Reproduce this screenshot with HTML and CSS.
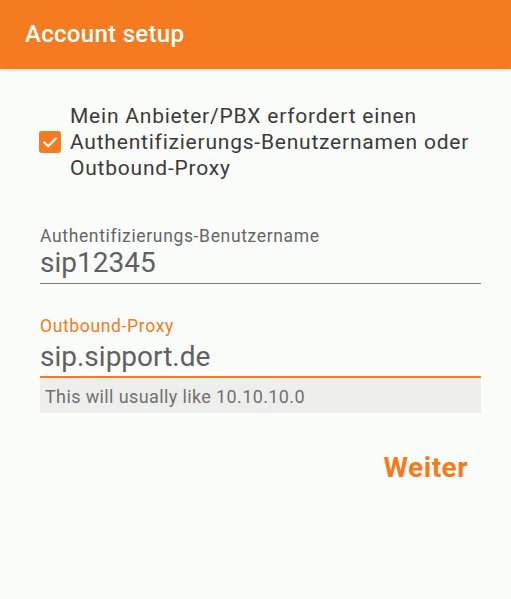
FILE: index.html
```html
<!DOCTYPE html>
<html lang="de">
<head>
<meta charset="utf-8">
<title>Account setup</title>
<link rel="stylesheet" href="styles.css">
</head>
<body>
<header class="appbar">
  <h1 class="appbar-title">Account setup</h1>
</header>
<main class="content">
  <label class="check-row">
    <span class="checkbox">
      <svg viewBox="0 0 22 22" width="22" height="22" aria-hidden="true">
        <path d="M5.2 11.4 L9.2 15.2 L16.8 7.4" fill="none" stroke="#fff" stroke-width="2.2" stroke-linecap="round" stroke-linejoin="round"/>
      </svg>
    </span>
    <span class="check-text">Mein Anbieter/PBX erfordert einen Authentifizierungs-Benutzernamen oder Outbound-Proxy</span>
  </label>

  <div class="field field-first">
    <div class="field-label">Authentifizierungs-Benutzername</div>
    <div class="field-value">sip12345</div>
  </div>

  <div class="field field-focus">
    <div class="field-label">Outbound-Proxy</div>
    <div class="field-value">sip.sipport.de</div>
  </div>
  <div class="helper">This will usually like 10.10.10.0</div>

  <div class="actions">
    <button class="btn-text" type="button">Weiter</button>
  </div>
</main>
</body>
</html>
```

FILE: styles.css
```css
html, body {
  margin: 0;
  padding: 0;
}
body {
  width: 511px;
  height: 599px;
  background: #fafcf9;
  font-family: Roboto, "Noto Sans", sans-serif;
  overflow: hidden;
}
.appbar {
  height: 69px;
  background: #f47b20;
  box-shadow: 0 1px 3px rgba(0,0,0,0.18);
  display: flex;
  align-items: center;
  padding-left: 25px;
  box-sizing: border-box;
}
.appbar-title {
  margin: 0;
  margin-top: -2px;
  color: #fff;
  font-size: 24px;
  font-weight: 500;
  letter-spacing: 0.3px;
}
.content {
  padding: 0 30px 0 40px;
}
.check-row {
  display: flex;
  align-items: center;
  margin-top: 34px;
  margin-left: -1px;
}
.checkbox {
  flex: none;
  width: 22px;
  height: 22px;
  border-radius: 3px;
  background: #f47b20;
  display: flex;
  margin-right: 9px;
  margin-top: -1px;
}
.check-text {
  font-size: 21px;
  line-height: 26px;
  letter-spacing: 0.78px;
  color: #3a3a3a;
}
.field-first {
  margin-top: 45px;
}
.field-label {
  font-size: 17.5px;
  line-height: 20px;
  letter-spacing: 0.65px;
  color: #666;
}
.field-value {
  font-size: 28px;
  line-height: 34px;
  color: #606060;
  padding-bottom: 3px;
  border-bottom: 1.5px solid #7a7a7a;
}
.field-focus {
  margin-top: 32px;
}
.field-focus .field-label {
  color: #f47b20;
}
.field-focus .field-value {
  margin-top: 4px;
  padding-bottom: 2px;
  border-bottom: 2px solid #f47b20;
}
.helper {
  background: #eeefed;
  font-size: 18px;
  line-height: 33px;
  letter-spacing: 0.38px;
  padding: 2px 0 0 5px;
  color: #707070;
}
.actions {
  display: flex;
  justify-content: flex-end;
  margin-top: 39px;
  padding-right: 13px;
}
.btn-text {
  border: 0;
  background: none;
  padding: 0;
  font-family: inherit;
  font-size: 28px;
  line-height: 32px;
  font-weight: 700;
  letter-spacing: 0.5px;
  color: #f47b20;
  cursor: pointer;
}
```
